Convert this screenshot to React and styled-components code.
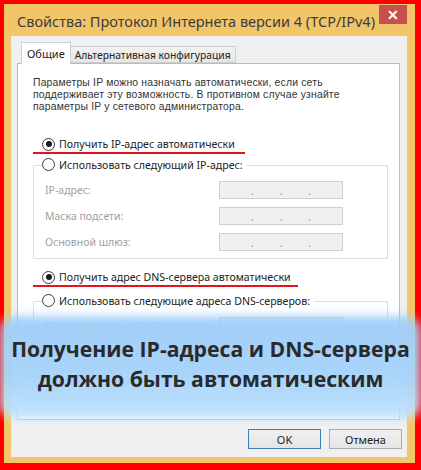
import React from 'react';
import styled, { createGlobalStyle } from 'styled-components';

const GlobalStyle = createGlobalStyle`
  html, body {
    margin: 0;
    padding: 0;
    background: #fff;
  }
  * {
    box-sizing: border-box;
  }
`;

const Frame = styled.div`
  position: relative;
  width: 421px;
  height: 470px;
  padding: 4px 6px 7px 4px;
  background: #ff0000;
  overflow: hidden;
  font-family: "Noto Sans", "Open Sans", sans-serif;
`;

const Window = styled.div`
  display: flex;
  flex-direction: column;
  height: 100%;
  padding: 0 8px 6px 7px;
  background: #f2c568;
`;

const TitleBar = styled.div`
  display: flex;
  justify-content: space-between;
  align-items: flex-start;
  height: 32px;
  flex-shrink: 0;
`;

const Title = styled.div`
  margin-top: 7px;
  padding-left: 6px;
  font-size: 14.5px;
  color: #3c3c3c;
  white-space: nowrap;
`;

const CloseButton = styled.div`
  display: flex;
  align-items: center;
  justify-content: center;
  width: 28px;
  height: 19px;
  margin-top: 1px;
  background: #c7504f;
  color: #fff;
  font-size: 14px;
  font-weight: bold;
  line-height: 1;
`;

const Body = styled.div`
  flex: 1;
  display: flex;
  flex-direction: column;
  padding: 6px 7px 8px 6px;
  background: #f0f0f0;
`;

const Tabs = styled.div`
  display: flex;
  align-items: flex-end;
  padding-left: 4px;
  height: 21px;
  position: relative;
  z-index: 1;
`;

const Tab = styled.div`
  height: ${p => (p.active ? '22px' : '17px')};
  margin-bottom: ${p => (p.active ? '-1px' : '0')};
  padding: 0 ${p => (p.active ? '5px' : '4px')};
  display: flex;
  align-items: center;
  font-size: ${p => (p.active ? '11px' : '10.3px')};
  color: #222;
  background: ${p => (p.active ? '#fff' : 'linear-gradient(#f2f2f2, #e6e6e6)')};
  border: 1px solid #d0d0d0;
  border-bottom: ${p => (p.active ? 'none' : '1px solid #d0d0d0')};
  border-left: ${p => (p.first ? '1px solid #d0d0d0' : 'none')};
  white-space: nowrap;
`;

const Panel = styled.div`
  flex: 1;
  display: flex;
  flex-direction: column;
  align-items: flex-start;
  padding: 13px 11px 0 15px;
  background: #fff;
  border: 1px solid #b6bcc4;
`;

const Description = styled.p`
  margin: 0;
  font-family: "Liberation Sans", Arial, sans-serif;
  font-size: 10.4px;
  line-height: 12px;
  letter-spacing: 0.18px;
  color: #333;
`;

const RadioRow = styled.div`
  display: inline-flex;
  align-items: center;
  gap: 4px;
  height: ${p => (p.marked ? '18px' : '16px')};
  margin-top: ${p => p.top || 0}px;
  padding: 0 ${p => p.tail || 0}px 0 9px;
  border-bottom: ${p => (p.marked ? '2px solid #e3141b' : 'none')};
  font-size: 10.6px;
  color: #222;
  white-space: nowrap;
`;

const RadioCircle = styled.span`
  display: flex;
  align-items: center;
  justify-content: center;
  width: 13px;
  height: 13px;
  border: 1px solid #3a3a3a;
  border-radius: 50%;
  background: #fff;

  &::after {
    content: '';
    display: ${p => (p.checked ? 'block' : 'none')};
    width: 6px;
    height: 6px;
    border-radius: 50%;
    background: #1c1c1c;
  }
`;

const Group = styled.fieldset`
  align-self: stretch;
  display: flex;
  flex-direction: column;
  gap: 8px;
  margin: ${p => p.top || 0}px 0 0 0;
  padding: 5px 0 7px 11px;
  border: 1px solid #dcdcdc;
  min-width: 0;
  min-height: ${p => p.minHeight || 0}px;
`;

const Legend = styled.legend`
  margin-left: -3px;
  padding: 0 4px 0 0;

  & > div {
    padding-left: 0;
  }
`;

const Field = styled.div`
  display: flex;
  align-items: center;
  justify-content: space-between;
  width: 298px;
  height: 18px;
  font-size: 10.5px;
  color: #a0a0a0;
`;

const IpBox = styled.div`
  display: flex;
  justify-content: space-around;
  align-items: flex-end;
  width: 124px;
  height: 18px;
  padding: 0 18px 2px;
  background: #f0f0f0;
  border: 1px solid #cfcfcf;
  color: #8a8a8a;
  font-size: 10px;
  line-height: 1;
`;

const ExtraRow = styled.div`
  align-self: stretch;
  display: flex;
  justify-content: flex-end;
  margin-top: ${p => p.top || 0}px;
`;

const SmallButton = styled.div`
  width: 108px;
  height: 18px;
  margin-right: 1px;
  background: linear-gradient(#f0f0f0, #e5e5e5);
  border: 1px solid #acacac;
`;

const ButtonBar = styled.div`
  display: flex;
  justify-content: flex-end;
  gap: 8px;
  margin: 9px -2px 0 0;
`;

const DialogButton = styled.div`
  width: 73px;
  height: 20px;
  display: flex;
  align-items: center;
  justify-content: center;
  font-size: 11px;
  color: #222;
  background: linear-gradient(#f0f0f0, #e5e5e5);
  border: 1px solid ${p => (p.primary ? '#3c7fb1' : '#acacac')};
`;

const Banner = styled.div`
  position: absolute;
  left: 0;
  right: 0;
  top: 313px;
  height: 106px;
  display: flex;
  flex-direction: column;
  align-items: center;
  justify-content: center;
  padding-bottom: 4px;

  &::before {
    content: '';
    position: absolute;
    inset: 3px 0 0 0;
    border-radius: 16px;
    background: linear-gradient(#9fcdf7, #a6d4fb 60%, #c4e3fc);
    filter: blur(5px);
    opacity: 0.96;
  }
`;

const BannerLine = styled.div`
  position: relative;
  font-family: "Open Sans", "Noto Sans", sans-serif;
  font-weight: bold;
  font-size: 21.2px;
  line-height: 30px;
  color: #2a2a2a;
  white-space: nowrap;
`;

function Radio({ checked, label, marked, top, tail }) {
  return (
    <RadioRow marked={marked} top={top} tail={tail}>
      <RadioCircle checked={checked} />
      {label}
    </RadioRow>
  );
}

function IpField({ label }) {
  return (
    <Field>
      {label}
      <IpBox>
        <span>.</span>
        <span>.</span>
        <span>.</span>
      </IpBox>
    </Field>
  );
}

export default function App() {
  return (
    <Frame>
      <GlobalStyle />
      <Window>
        <TitleBar>
          <Title>Свойства: Протокол Интернета версии 4 (TCP/IPv4)</Title>
          <CloseButton>✕</CloseButton>
        </TitleBar>
        <Body>
          <Tabs>
            <Tab active first>Общие</Tab>
            <Tab>Альтернативная конфигурация</Tab>
          </Tabs>
          <Panel>
            <Description>
              Параметры IP можно назначать автоматически, если сеть<br />
              поддерживает эту возможность. В противном случае узнайте<br />
              параметры IP у сетевого администратора.
            </Description>
            <Radio checked marked top={23} tail={10} label="Получить IP-адрес автоматически" />
            <Group top={0}>
              <Legend>
                <Radio label="Использовать следующий IP-адрес:" />
              </Legend>
              <IpField label="IP-адрес:" />
              <IpField label="Маска подсети:" />
              <IpField label="Основной шлюз:" />
            </Group>
            <Radio checked marked top={10} tail={7} label="Получить адрес DNS-сервера автоматически" />
            <Group top={3} minHeight={62}>
              <Legend>
                <Radio label="Использовать следующие адреса DNS-серверов:" />
              </Legend>
              <IpField label="Предпочитаемый DNS-сервер:" />
            </Group>
            <ExtraRow top={30}>
              <SmallButton />
            </ExtraRow>
          </Panel>
          <ButtonBar>
            <DialogButton primary>OK</DialogButton>
            <DialogButton>Отмена</DialogButton>
          </ButtonBar>
        </Body>
      </Window>
      <Banner>
        <BannerLine>Получение IP-адреса и DNS-сервера</BannerLine>
        <BannerLine>должно быть автоматическим</BannerLine>
      </Banner>
    </Frame>
  );
}
